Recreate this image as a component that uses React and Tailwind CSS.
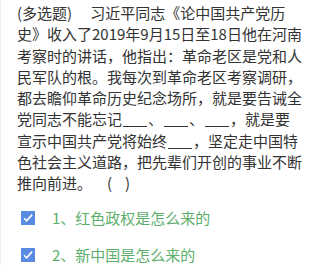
import React from "react";

const options = ["1、红色政权是怎么来的", "2、新中国是怎么来的"];

function CheckBox() {
  return (
    <span className="flex h-[14px] w-[14px] shrink-0 items-center justify-center bg-[#5a8be3]">
      <svg viewBox="0 0 14 14" className="h-[14px] w-[14px]">
        <path d="M3 7.2l2.6 2.6L11.2 3.6" fill="none" stroke="#fff" strokeWidth="1.6" />
      </svg>
    </span>
  );
}

function Blank() {
  return <span className="mx-[1px] inline-block h-[14px] w-[24px] border-b border-[#333] align-[-2px]" />;
}

export default function App() {
  return (
    <div
      className="h-[277px] w-[320px] overflow-hidden bg-white"
      style={{ fontFamily: '"Noto Sans CJK SC", "Noto Sans", sans-serif' }}
    >
      <div className="border-l border-[#eee] pl-[16px] pr-[16px] pt-[2px]">
        <p className="text-[15px] leading-[21.25px] text-[#333]">
          (多选题)<span className="inline-block w-[18px]" />习近平同志《论中国共产党历史》收入了2019年9月15日至18日他在河南考察时的讲话，他指出：革命老区是党和人民军队的根。我每次到革命老区考察调研，都去瞻仰革命历史纪念场所，就是要告诫全党同志不能忘记
          <Blank />、<Blank />、<Blank />，就是要宣示中国共产党将始终<Blank />，坚定走中国特色社会主义道路，把先辈们开创的事业不断推向前进。
          <span className="ml-[15px]">(</span>
          <span className="ml-[13px]">)</span>
        </p>
        <ul className="mt-[14px] flex flex-col gap-[16px] pl-[4px]">
          {options.map((o) => (
            <li key={o} className="flex h-[21px] items-center gap-[17px]">
              <CheckBox />
              <span className="text-[15px] text-[#5cae6b]">{o}</span>
            </li>
          ))}
        </ul>
      </div>
    </div>
  );
}
